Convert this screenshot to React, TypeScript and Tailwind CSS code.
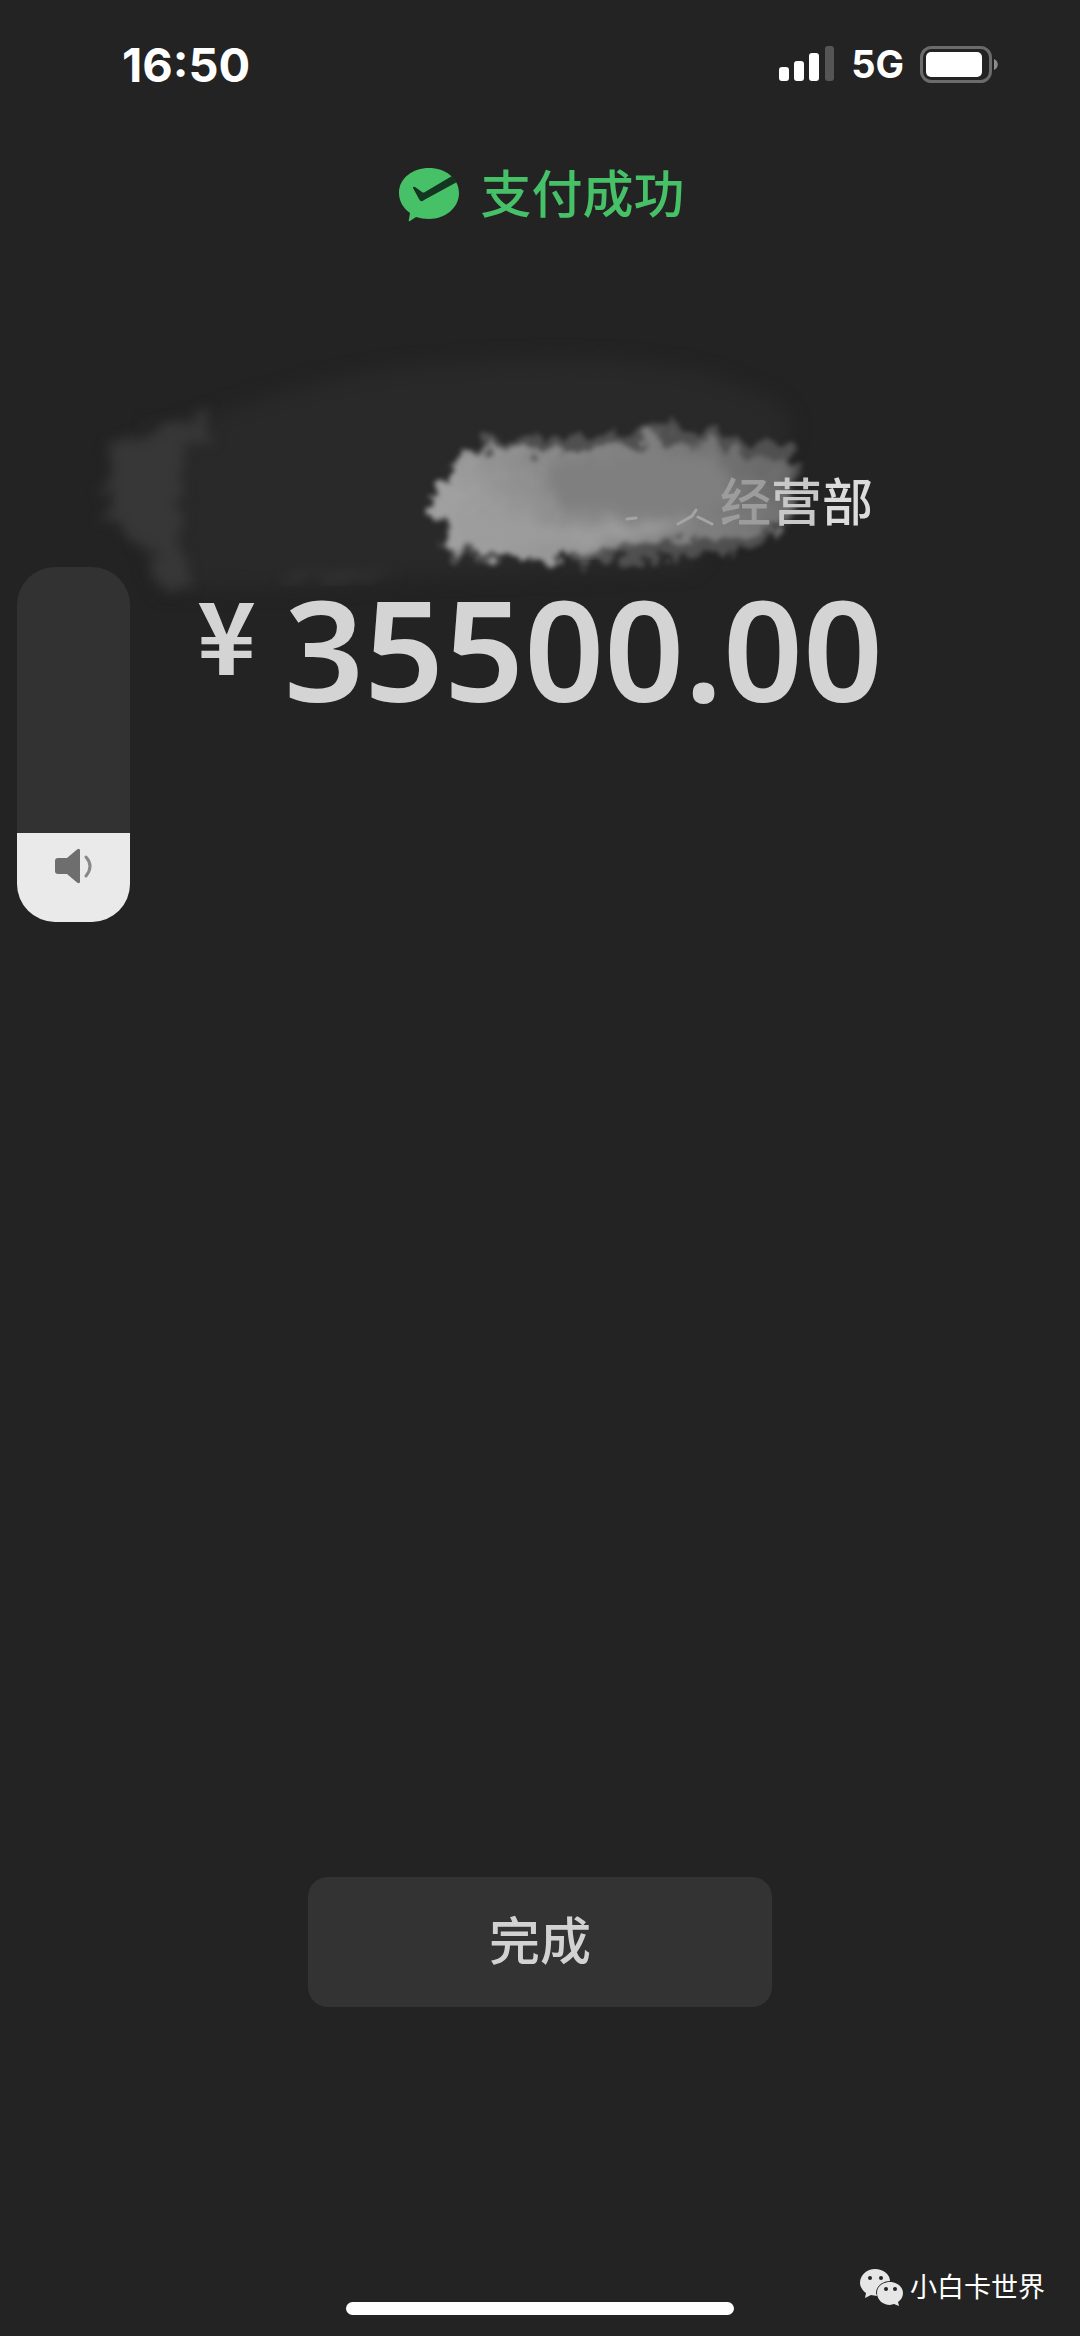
import { useState } from 'react'

function StatusBar() {
  return (
    <header className="flex h-32 items-center justify-between pl-[122px] pr-[82px] text-white">
      <time className="text-[47px] font-bold leading-none">16:50</time>
      <div className="flex items-center gap-4">
        <svg className="h-9 w-14" viewBox="0 0 56 36" fill="#fff" aria-hidden="true">
          <rect x="0" y="21" width="10" height="14" rx="3" />
          <rect x="15" y="15" width="10" height="20" rx="3" />
          <rect x="30" y="7" width="10" height="28" rx="3" />
          <rect x="46" y="0" width="9" height="35" rx="3" fill="#555" />
        </svg>
        <span className="text-[38px] font-bold leading-none">5G</span>
        <svg className="h-[37px] w-[78px]" viewBox="0 0 78 37" aria-hidden="true">
          <rect x="1.5" y="1.5" width="69" height="34" rx="10" fill="none" stroke="#6b6b6b" strokeWidth="3" />
          <rect x="6" y="6" width="56" height="25" rx="5" fill="#fff" />
          <path d="M74 13c5 2 5 9 0 11z" fill="#8c8c8c" />
        </svg>
      </div>
    </header>
  )
}

// Brushed-out area over the payee name
function Smudge() {
  return (
    <svg
      className="pointer-events-none absolute left-0 top-[320px] w-full"
      viewBox="0 320 1080 320"
      aria-hidden="true"
    >
      <defs>
        <filter id="haze" x="-20%" y="-20%" width="140%" height="140%" colorInterpolationFilters="sRGB">
          <feGaussianBlur stdDeviation="9" />
        </filter>
        <filter id="soft" x="-20%" y="-20%" width="140%" height="140%" colorInterpolationFilters="sRGB">
          <feTurbulence type="fractalNoise" baseFrequency="0.04" numOctaves="4" seed="4" />
          <feDisplacementMap in="SourceGraphic" scale="36" xChannelSelector="R" yChannelSelector="G" />
          <feGaussianBlur stdDeviation="6" />
        </filter>
        <filter id="rough" x="-10%" y="-20%" width="120%" height="140%" colorInterpolationFilters="sRGB">
          <feTurbulence type="fractalNoise" baseFrequency="0.05" numOctaves="4" seed="8" />
          <feDisplacementMap in="SourceGraphic" scale="44" xChannelSelector="R" yChannelSelector="G" />
          <feGaussianBlur stdDeviation="2.5" />
        </filter>
        <filter id="blend" x="-10%" y="-30%" width="120%" height="160%" colorInterpolationFilters="sRGB">
          <feTurbulence type="fractalNoise" baseFrequency="0.05" numOctaves="3" seed="2" />
          <feDisplacementMap in="SourceGraphic" scale="26" xChannelSelector="R" yChannelSelector="G" />
          <feGaussianBlur stdDeviation="6" />
        </filter>
        <linearGradient id="brush" x1="0" x2="1" y1="0.3" y2="0">
          <stop offset="0" stopColor="#a0a0a0" />
          <stop offset="0.3" stopColor="#8a8a8a" />
          <stop offset="0.65" stopColor="#7c7c7c" />
          <stop offset="1" stopColor="#606060" />
        </linearGradient>
      </defs>
      <path
        d="M150 435 C260 400 340 368 450 364 C580 352 690 362 735 385 C780 400 795 410 790 440 L690 570 L420 578 L300 588 L160 590 L130 500Z"
        fill="#292929"
        filter="url(#haze)"
      />
      <path
        d="M104 452 L126 435 L160 422 L216 416 L204 436 L184 446 L180 480 L184 530 L194 570 L182 590 L164 588 L142 536 L106 522Z"
        fill="#373737"
        filter="url(#soft)"
      />
      <path d="M290 572 L370 566 L400 574 L290 582Z" fill="#303030" filter="url(#soft)" />
      <g filter="url(#rough)">
        <path
          d="M434 488 L456 454 L482 442 L560 436 L650 428 L710 430 L750 440 L794 450 L798 490 L792 515 L772 542 L744 554 L640 560 L540 562 L450 560 L438 530Z"
          fill="#505050"
        />
        <path
          d="M434 492 L456 456 L490 446 L530 454 L590 454 L660 438 L710 446 L750 454 L790 464 L792 500 L780 530 L740 536 L680 540 L620 548 L560 560 L460 556 L442 530Z"
          fill="url(#brush)"
        />
      </g>
      <path d="M450 510 L560 524 L690 520 L650 534 L570 548 L465 546Z" fill="#9c9c9c" filter="url(#blend)" />
      <path d="M550 465 L640 455 L715 455 L735 500 L690 512 L560 512Z" fill="#7f7f7f" filter="url(#blend)" />
      <g fill="none" stroke="#a4a4a4" strokeWidth="3" strokeLinecap="round">
        <path d="M627 519l9-1M678 524l14-8 4-6M698 517l14 7M724 523l14-7" />
      </g>
    </svg>
  )
}

function VolumeSlider() {
  const [volume, setVolume] = useState(25)

  return (
    <div className="absolute left-[17px] top-[567px] h-[355px] w-[113px] overflow-hidden rounded-[38px] bg-[#323232]">
      <div className="absolute inset-x-0 bottom-0 bg-[#eaeaea]" style={{ height: `${volume}%` }} />
      <svg className="absolute bottom-[38px] left-[38px] h-9 w-10" viewBox="0 0 40 36" aria-hidden="true">
        <path
          d="M3 10h9L22 1.500q3-2 3 1v31q0 3-3 1L12 26H3q-3 0-3-3V13q0-3 3-3z"
          fill="#6e6e6e"
        />
        <path d="M31 9q8 9 0 19" fill="none" stroke="#888" strokeWidth="3" strokeLinecap="round" />
      </svg>
      <input
        type="range"
        aria-label="音量"
        min={0}
        max={100}
        value={volume}
        onChange={(e) => setVolume(Number(e.target.value))}
        className="absolute inset-0 h-full w-full cursor-pointer opacity-0 [direction:rtl] [writing-mode:vertical-lr]"
      />
    </div>
  )
}

export default function App() {
  return (
    <div className="relative flex min-h-screen flex-col overflow-hidden bg-[#232323] font-[Inter,'Noto_Sans_CJK_SC',sans-serif]">
      <StatusBar />
      <Smudge />

      <main className="relative flex flex-1 flex-col items-center">
        <h1 className="flex h-[134px] items-center gap-5 pl-1 text-[51px] font-medium text-[#47c168]">
          <svg className="h-[56px] w-[61px]" viewBox="0 0 61 56" aria-hidden="true">
            <path
              d="M30 1C46 1 60 11 60 26S46 52 30 52q-7 0-13-2L11 54q-2 1-1-2l1-6C4 41 0 34 0 26 0 11 14 1 30 1z"
              fill="currentColor"
            />
            <path
              d="M14 21q0-2 2-1l7 5q1 1 3 0L53 9l5 6L25 33q-3 3-5-1z"
              fill="#14351f"
            />
          </svg>
          支付成功
        </h1>

        <p className="mt-[203px] flex h-[76px] w-full items-center justify-end pr-[207px] text-[51px] font-medium text-[#dcdcdc]">
          <span className="text-[#9c9c9c]">经</span>
          <span className="text-[#c8c8c8]">营</span>
          <span>部</span>
        </p>

        <p className="mt-[34px] flex items-start gap-7 text-[#d4d4d4]">
          <span className="font-['Noto_Sans_CJK_SC',sans-serif] text-[100px] font-bold leading-[114px]">¥</span>
          <span className="font-['Noto_Sans',sans-serif] text-[140px] font-semibold leading-[146px]">35500.00</span>
        </p>

        <button
          type="button"
          className="mt-auto h-[130px] w-[43%] rounded-[20px] bg-[#333] text-[51px] font-medium text-[#d2d2d2]"
        >
          完成
        </button>
        <div className="mb-[21px] mt-[295px] h-[13px] w-[36%] rounded-full bg-white" />
      </main>

      <VolumeSlider />

      <div className="absolute bottom-7 right-[35px] flex items-center gap-[6px] text-[27px] leading-[40px] text-white">
        <svg className="h-[38px] w-[44px]" viewBox="0 0 44 38" fill="#e6e6e6" aria-hidden="true">
          <path d="M15 0c8 0 15 5 15 12-8 0-14 6-14 12l1 3-6-1-6 3 1-5C3 22 0 18 0 14 0 6 7 0 15 0z" />
          <path d="M30 13c7 0 13 5 13 11 0 4-2 7-5 9l1 4-5-2-4 1c-7 0-13-5-13-12s6-11 13-11z" />
          <g fill="#232323">
            <circle cx="10" cy="9" r="2" />
            <circle cx="21" cy="9" r="2" />
            <circle cx="26" cy="20" r="2" />
            <circle cx="35" cy="20" r="2" />
          </g>
        </svg>
        小白卡世界
      </div>
    </div>
  )
}
